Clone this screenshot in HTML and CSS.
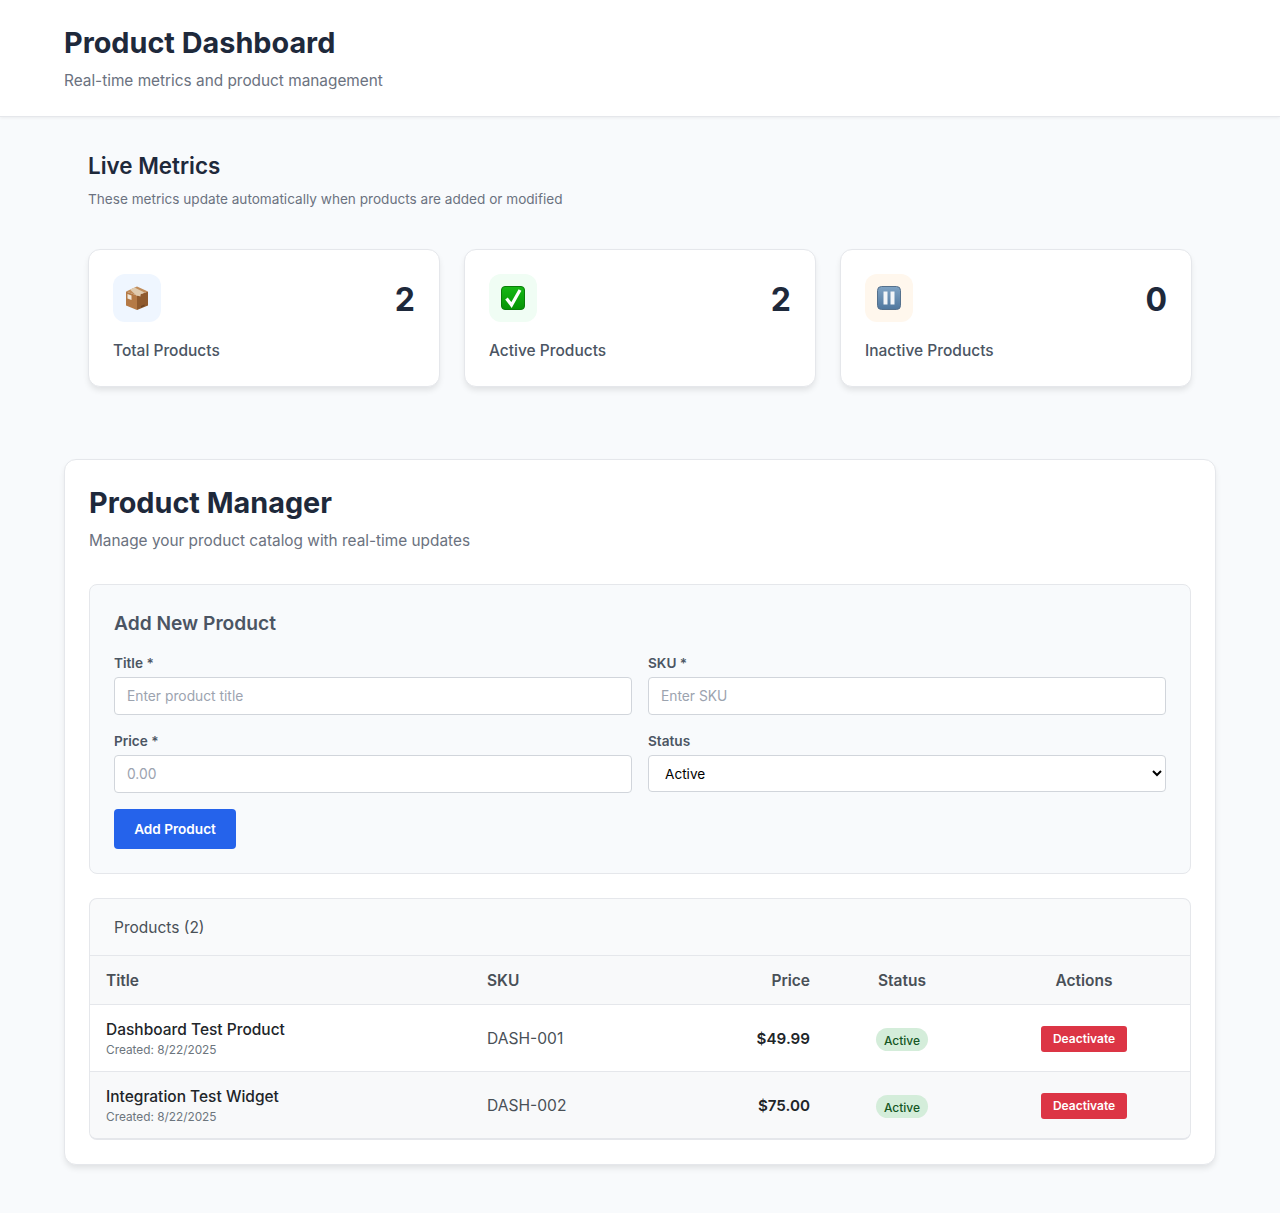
FILE: index.html
```html
<!DOCTYPE html>
<html>
<head>
    <meta charset="UTF-8">
    <title>Product Dashboard</title>
    <link rel="stylesheet" href="styles.css">
</head>
<body>
    <header class="page-header">
        <h1>Product Dashboard</h1>
        <p>Real-time metrics and product management</p>
    </header>

    <main class="page-main">
        <section class="metrics">
            <h2>Live Metrics</h2>
            <p class="metrics-note">These metrics update automatically when products are added or modified</p>
            <div class="metric-grid">
                <div class="metric-card">
                    <div class="metric-top">
                        <div class="metric-icon icon-blue">
                            <svg viewBox="0 0 24 24" width="24" height="24">
                                <path d="M12 24 L23 19.5 V5.5 L12 9.5 Z" fill="#8f5a2e"/>
                                <path d="M12 24 L1 19.5 V5.5 L12 9.5 Z" fill="#b57a46"/>
                                <path d="M12 0.5 L23 5.5 L12 9.5 L1 5.5 Z" fill="#c08c5a"/>
                                <path d="M5 3.6 L9.5 1.6 L19.5 6.4 L15.5 8.3 V10.5 L11 9.2 Z" fill="#e0cbaf"/>
                                <path d="M2.5 8 L6.5 9.4 V14 L2.5 12.6 Z" fill="#efe6d8"/>
                                <path d="M16 20 L19.5 18.5 V20 L16 21.5 Z" fill="#6d4322"/>
                            </svg>
                        </div>
                        <div class="metric-value">2</div>
                    </div>
                    <div class="metric-label">Total Products</div>
                </div>
                <div class="metric-card">
                    <div class="metric-top">
                        <div class="metric-icon icon-green">
                            <svg viewBox="0 0 24 24" width="24" height="24">
                                <defs>
                                    <linearGradient id="checkFill" x1="0" y1="0" x2="0" y2="1">
                                        <stop offset="0" stop-color="#16b816"/>
                                        <stop offset="1" stop-color="#069406"/>
                                    </linearGradient>
                                </defs>
                                <rect x="0.5" y="0.5" width="23" height="23" rx="3.5" fill="url(#checkFill)" stroke="#0a7d0a"/>
                                <path d="M5.5 12.5 L10.5 19 L19 4" fill="none" stroke="#fff" stroke-width="3.2"/>
                            </svg>
                        </div>
                        <div class="metric-value">2</div>
                    </div>
                    <div class="metric-label">Active Products</div>
                </div>
                <div class="metric-card">
                    <div class="metric-top">
                        <div class="metric-icon icon-orange">
                            <svg viewBox="0 0 24 24" width="24" height="24">
                                <defs>
                                    <linearGradient id="pauseFill" x1="0" y1="0" x2="0" y2="1">
                                        <stop offset="0" stop-color="#7fa3c4"/>
                                        <stop offset="1" stop-color="#4f779e"/>
                                    </linearGradient>
                                </defs>
                                <rect x="0.5" y="0.5" width="23" height="23" rx="4" fill="url(#pauseFill)" stroke="#54708c"/>
                                <rect x="6.5" y="5.5" width="4" height="13" fill="#f2f5f8"/>
                                <rect x="13.5" y="5.5" width="4" height="13" fill="#f2f5f8"/>
                            </svg>
                        </div>
                        <div class="metric-value">0</div>
                    </div>
                    <div class="metric-label">Inactive Products</div>
                </div>
            </div>
        </section>

        <section class="manager">
            <h2>Product Manager</h2>
            <p class="manager-note">Manage your product catalog with real-time updates</p>

            <form class="add-form">
                <h3>Add New Product</h3>
                <div class="form-grid">
                    <div class="field">
                        <label>Title *</label>
                        <input type="text" placeholder="Enter product title">
                    </div>
                    <div class="field">
                        <label>SKU *</label>
                        <input type="text" placeholder="Enter SKU">
                    </div>
                    <div class="field">
                        <label>Price *</label>
                        <input type="text" placeholder="0.00">
                    </div>
                    <div class="field">
                        <label>Status</label>
                        <select>
                            <option>Active</option>
                            <option>Inactive</option>
                        </select>
                    </div>
                </div>
                <button type="button" class="add-btn">Add Product</button>
            </form>

            <div class="products">
                <div class="products-head">Products (2)</div>
                <table>
                    <thead>
                        <tr>
                            <th class="col-title">Title</th>
                            <th class="col-sku">SKU</th>
                            <th class="col-price">Price</th>
                            <th class="col-status">Status</th>
                            <th class="col-actions">Actions</th>
                        </tr>
                    </thead>
                    <tbody>
                        <tr>
                            <td class="product">
                                <div class="product-name">Dashboard Test Product</div>
                                <div class="product-date">Created: 8/22/2025</div>
                            </td>
                            <td class="sku">DASH-001</td>
                            <td class="price">$49.99</td>
                            <td class="col-status"><span class="badge">Active</span></td>
                            <td class="col-actions"><button type="button" class="deactivate">Deactivate</button></td>
                        </tr>
                        <tr>
                            <td class="product">
                                <div class="product-name">Integration Test Widget</div>
                                <div class="product-date">Created: 8/22/2025</div>
                            </td>
                            <td class="sku">DASH-002</td>
                            <td class="price">$75.00</td>
                            <td class="col-status"><span class="badge">Active</span></td>
                            <td class="col-actions"><button type="button" class="deactivate">Deactivate</button></td>
                        </tr>
                    </tbody>
                </table>
            </div>
        </section>
    </main>
</body>
</html>
```

FILE: styles.css
```css
* {
    box-sizing: border-box;
}
body {
    margin: 0;
    font-family: 'Inter', 'Liberation Sans', sans-serif;
    background-color: #f8fafc;
    color: #1e293b;
}
h1, h2, h3, p {
    margin: 0;
}
.page-header {
    height: 117px;
    padding: 25px 64px 0;
    background-color: #fff;
    border-bottom: 1px solid #e5e7eb;
    box-shadow: 0 1px 3px rgba(0, 0, 0, 0.06);
}
.page-header h1 {
    font-size: 28.8px;
    line-height: 36px;
    font-weight: 700;
    color: #1e293b;
    margin-bottom: 8px;
}
.page-header p {
    font-size: 15.36px;
    line-height: 24px;
    color: #6b7280;
}
.page-main {
    padding: 0 64px 48px;
}
.metrics {
    padding: 32px 24px 0;
}
.metrics h2 {
    font-size: 22.4px;
    line-height: 34px;
    font-weight: 600;
    margin-bottom: 6px;
}
.metrics-note {
    font-size: 13.6px;
    line-height: 20px;
    color: #6b7280;
    margin-bottom: 40px;
}
.metric-grid {
    display: grid;
    grid-template-columns: repeat(3, 1fr);
    gap: 24px;
}
.metric-card {
    height: 138px;
    padding: 24px;
    background-color: #fff;
    border: 1px solid #e5e7eb;
    border-radius: 12px;
    box-shadow: 0 4px 6px -1px rgba(0, 0, 0, 0.1);
}
.metric-top {
    display: flex;
    justify-content: space-between;
    align-items: center;
    margin-bottom: 17px;
}
.metric-icon {
    width: 48px;
    height: 48px;
    border-radius: 12px;
    display: flex;
    align-items: center;
    justify-content: center;
}
.icon-blue {
    background-color: #eff6ff;
}
.icon-green {
    background-color: #f0fdf4;
}
.icon-orange {
    background-color: #fff7ed;
}
.metric-value {
    font-size: 32px;
    line-height: 38px;
    font-weight: 700;
    padding-top: 4px;
}
.metric-label {
    font-size: 15.5px;
    line-height: 24px;
    font-weight: 500;
    color: #4b5563;
}
.manager {
    margin-top: 72px;
    height: 706px;
    padding: 25px 24px 24px;
    background-color: #fff;
    border: 1px solid #e5e7eb;
    border-radius: 12px;
    box-shadow: 0 4px 6px -1px rgba(0, 0, 0, 0.1);
}
.manager h2 {
    font-size: 28.8px;
    line-height: 36px;
    font-weight: 700;
    margin-bottom: 8px;
}
.manager-note {
    font-size: 15.36px;
    line-height: 24px;
    color: #6b7280;
    margin-bottom: 31px;
}
.add-form {
    height: 290px;
    padding: 24px;
    background-color: #f8fafc;
    border: 1px solid #e5e7eb;
    border-radius: 8px;
    margin-bottom: 24px;
}
.add-form h3 {
    font-size: 19.2px;
    line-height: 28px;
    font-weight: 600;
    color: #4b5563;
    margin-bottom: 16px;
}
.form-grid {
    display: grid;
    grid-template-columns: 1fr 1fr;
    column-gap: 16px;
    row-gap: 16px;
    margin-bottom: 16px;
}
.field label {
    display: block;
    font-size: 13.6px;
    line-height: 21px;
    font-weight: 600;
    color: #4b5563;
    margin-bottom: 3px;
}
.field input, .field select {
    display: block;
    width: 100%;
    font-family: inherit;
    font-size: 13.6px;
    background-color: #fff;
    border: 1px solid #d1d5db;
    border-radius: 4px;
}
.field input {
    height: 38px;
    padding: 0 12px;
    font-size: 13.8px;
}
.field input::placeholder {
    color: #9ca3af;
}
.field select {
    height: 37px;
    padding: 0 12px;
    color: #000;
}
.add-btn {
    display: block;
    width: 122px;
    height: 40px;
    font-family: inherit;
    font-size: 13.6px;
    font-weight: 600;
    color: #fff;
    background-color: #2563eb;
    border: none;
    border-radius: 4px;
}
.products {
    background-color: #f9fafb;
    border: 1px solid #e5e7eb;
    border-bottom-width: 2px;
    border-radius: 8px;
    overflow: hidden;
}
.products-head {
    height: 57px;
    padding: 0 24px;
    display: flex;
    align-items: center;
    font-size: 15.5px;
    color: #495057;
    border-bottom: 1px solid #e5e7eb;
}
table {
    width: 100%;
    border-collapse: collapse;
    table-layout: fixed;
}
th {
    height: 48px;
    padding: 2px 16px 0;
    font-size: 15.5px;
    font-weight: 600;
    color: #495057;
    text-align: left;
    background-color: #f8f9fa;
    border-bottom: 1px solid #e5e7eb;
}
td {
    height: 67px;
    padding: 0 16px;
    font-size: 16px;
}
tbody tr {
    background-color: #fff;
}
tbody tr:nth-child(2) {
    background-color: #f8f9fa;
}
tbody tr:first-child td {
    border-bottom: 1px solid #e5e7eb;
}
.col-title {
    width: 381px;
}
.col-sku {
    width: 200px;
}
.col-price {
    width: 155px;
    text-align: right;
}
.col-status {
    width: 152px;
    text-align: center;
}
.col-actions {
    text-align: center;
}
td.product {
    padding-top: 2px;
}
.product-name {
    font-size: 15.5px;
    line-height: 20px;
    font-weight: 500;
    color: #212529;
}
.product-date {
    font-size: 11.84px;
    line-height: 16px;
    color: #6c757d;
    margin-top: 2px;
}
td.sku {
    padding-top: 2px;
    font-size: 15.6px;
    color: #495057;
}
td.price {
    padding-top: 2px;
    text-align: right;
    font-size: 15.2px;
    font-weight: 600;
    color: #212529;
}
.badge {
    display: inline-block;
    vertical-align: middle;
    margin-top: 3px;
    padding: 5px 8px 3px;
    font-size: 12px;
    line-height: 15px;
    font-weight: 500;
    color: #155724;
    background-color: #d4edda;
    border-radius: 12px;
}
.deactivate {
    width: 86px;
    height: 26px;
    padding: 0;
    margin-top: 2px;
    vertical-align: middle;
    font-family: inherit;
    font-size: 12px;
    font-weight: 600;
    color: #fff;
    background-color: #dc3545;
    border: none;
    border-radius: 3px;
}
```
